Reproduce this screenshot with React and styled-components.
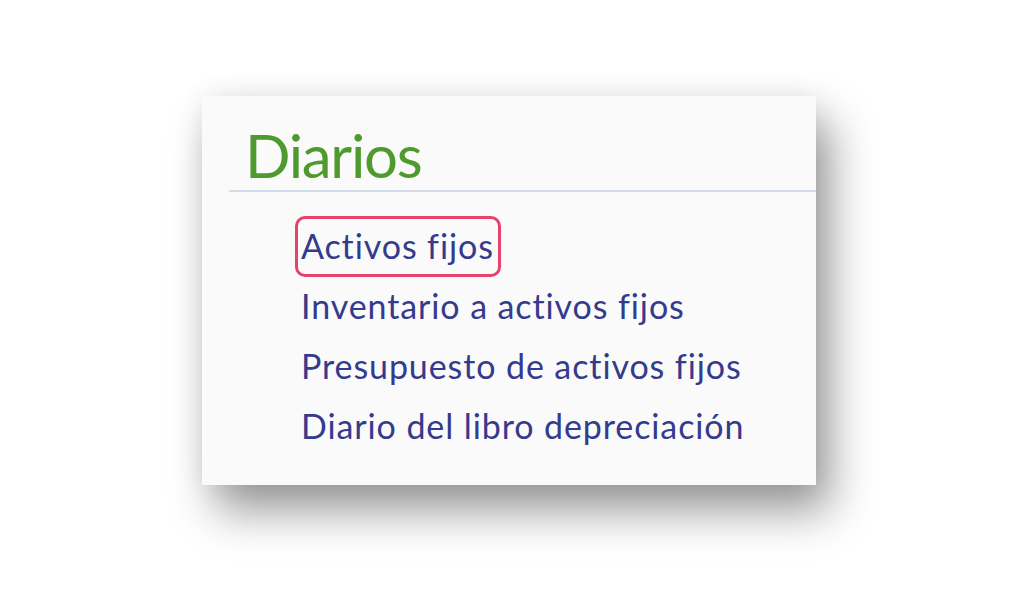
import React from 'react';
import styled, { createGlobalStyle } from 'styled-components';

const GlobalStyle = createGlobalStyle`
    html, body {
        margin: 0;
        padding: 0;
        background: #ffffff;
    }
    body {
        font-family: Lato, "Open Sans", sans-serif;
    }
`

const links = [
    { id: 'activos', label: 'Activos fijos', selected: true },
    { id: 'inventario', label: 'Inventario a activos fijos' },
    { id: 'presupuesto', label: 'Presupuesto de activos fijos' },
    { id: 'diario', label: 'Diario del libro depreciación' },
]

const App = () => {
    return (
        <Page>
            <GlobalStyle />
            <Panel>
                <Title>Diarios</Title>
                <Divider />
                <LinkList>
                    {links.map(link => (
                        <li key={link.id}>
                            <MenuLink href="#" $selected={link.selected}>{link.label}</MenuLink>
                        </li>
                    ))}
                </LinkList>
            </Panel>
        </Page>
    )
}

const Page = styled.div`
    width: 1028px;
    height: 616px;
    box-sizing: border-box;
    padding: 96px 0 0 202px;
    overflow: hidden;
`

const Panel = styled.section`
    width: 614px;
    height: 389px;
    background: #fafafa;
    box-shadow:
        0 0 26px rgba(0, 0, 0, 0.07),
        14px 26px 42px rgba(0, 0, 0, 0.4);
    display: flex;
    flex-direction: column;
`

const Title = styled.h2`
    margin: 29px 0 0 43px;
    font-family: Lato, sans-serif;
    font-weight: 400;
    font-size: 60px;
    line-height: 60px;
    letter-spacing: -1.3px;
    color: #4e9a2e;
`

const Divider = styled.hr`
    margin: 5px 0 0 27px;
    border: 0;
    height: 2px;
    background: #d3dde7;
`

const LinkList = styled.ul`
    list-style: none;
    margin: 24px 0 0;
    padding: 0 0 0 99px;
    display: flex;
    flex-direction: column;
`

const MenuLink = styled.a`
    position: relative;
    display: inline-block;
    font-size: 34px;
    line-height: 60px;
    letter-spacing: 0.9px;
    color: #353b8c;
    text-decoration: none;

    &::before {
        content: '';
        display: ${props => props.$selected ? 'block' : 'none'};
        position: absolute;
        left: -6px;
        right: -7px;
        top: 0;
        bottom: -1px;
        border: 3px solid #e8416a;
        border-radius: 10px;
    }
`

export default App
